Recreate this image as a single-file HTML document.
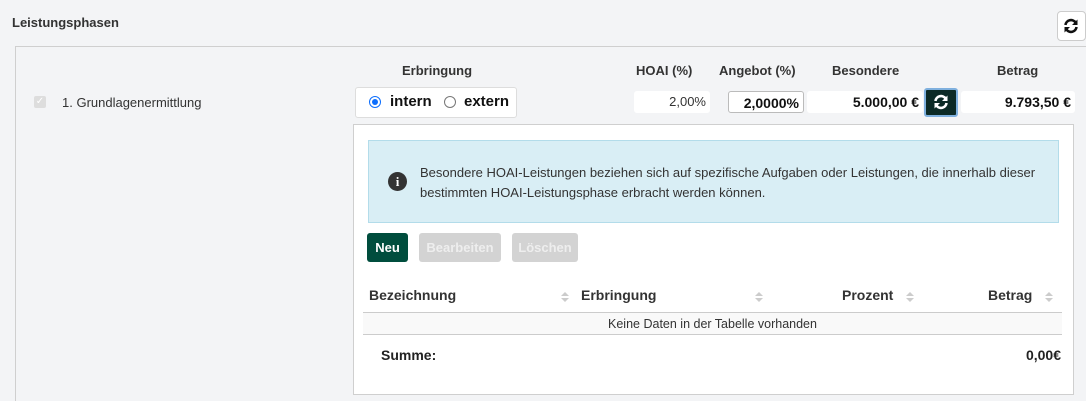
<!DOCTYPE html>
<html style="height:401px;overflow:hidden"><head><meta charset="utf-8"><style>
*{box-sizing:border-box;margin:0;padding:0}
body{width:1086px;height:401px;background:#f3f4f6;font-family:"Liberation Sans",sans-serif;font-size:13px;color:#333;position:relative;overflow:hidden}
.a{position:absolute;white-space:nowrap}
.b{font-weight:bold}
.field{position:absolute;background:#fff;border-radius:3px;height:22px;line-height:22px;text-align:right;padding-right:4px;font-size:13px;color:#111}
.sort{position:absolute;width:8px;height:12px}
.sort:before{content:"";position:absolute;left:0;top:0;border:4px solid transparent;border-bottom:4px solid #ccc;border-top:0}
.sort:after{content:"";position:absolute;left:0;top:6px;border:4px solid transparent;border-top:4px solid #ccc;border-bottom:0}
</style></head><body>
<div class="a b" style="left:12px;top:15px;font-size:13px;color:#333">Leistungsphasen</div>
<div class="a" style="left:1057px;top:11px;width:29px;height:30px;background:#fff;border:1px solid #ccc;border-radius:4px"></div>
<svg class="a" style="left:1063px;top:18px" width="16" height="16" viewBox="0 0 16 16"><path d="M2.5 7 A5.5 5.5 0 0 1 12.5 4.5" fill="none" stroke="#111" stroke-width="2.6"/><path d="M14.5 1.5 L14.5 7 L9 7 Z" fill="#111"/><path d="M13.5 9 A5.5 5.5 0 0 1 3.5 11.5" fill="none" stroke="#111" stroke-width="2.6"/><path d="M1.5 14.5 L1.5 9 L7 9 Z" fill="#111"/></svg>
<div class="a" style="left:15px;top:46px;width:1071px;height:355px;border:1px solid #cfcfcf;border-right:none;border-bottom:none"></div>
<div class="a b" style="left:402px;top:63px">Erbringung</div>
<div class="a b" style="left:636px;top:63px">HOAI (%)</div>
<div class="a b" style="left:719px;top:63px">Angebot (%)</div>
<div class="a b" style="left:832px;top:63px">Besondere</div>
<div class="a b" style="left:997px;top:63px">Betrag</div>
<div class="a" style="left:34px;top:96px;width:12px;height:12px;background:#ddd;border-radius:2px;color:#fff;font-size:10px;line-height:12px;text-align:center">✓</div>
<div class="a" style="left:62px;top:95px;color:#333">1. Grundlagenermittlung</div>
<div class="a" style="left:355px;top:87px;width:162px;height:31px;background:#fff;border:1px solid #ddd;border-radius:3px"></div>
<div class="a" style="left:369px;top:96px;width:12px;height:12px;border-radius:50%;border:1px solid #0d6efd;background:#fff"><div style="margin:2px;width:6px;height:6px;border-radius:50%;background:#0d6efd"></div></div>
<div class="a b" style="left:390px;top:93px;font-size:15px;color:#111">intern</div>
<div class="a" style="left:444px;top:96px;width:12px;height:12px;border-radius:50%;border:1px solid #777;background:#fff"></div>
<div class="a b" style="left:464px;top:93px;font-size:15px;color:#111">extern</div>
<div class="field" style="left:634px;top:91px;width:76px;color:#333">2,00%</div>
<div class="field b" style="left:728px;top:91px;width:76px;border:1px solid #bbb;font-size:14px">2,0000%</div>
<div class="field b" style="left:807px;top:91px;width:116px;font-size:14px">5.000,00 €</div>
<div class="a" style="left:924px;top:88px;width:34px;height:29px;background:#0c2a26;border:2px solid #7fb0de;border-radius:3px"></div>
<svg class="a" style="left:933px;top:94px" width="16" height="16" viewBox="0 0 16 16"><path d="M2.5 7 A5.5 5.5 0 0 1 12.5 4.5" fill="none" stroke="#fff" stroke-width="2.6"/><path d="M14.5 1.5 L14.5 7 L9 7 Z" fill="#fff"/><path d="M13.5 9 A5.5 5.5 0 0 1 3.5 11.5" fill="none" stroke="#fff" stroke-width="2.6"/><path d="M1.5 14.5 L1.5 9 L7 9 Z" fill="#fff"/></svg>
<div class="field b" style="left:961px;top:91px;width:114px;font-size:14px">9.793,50 €</div>
<div class="a" style="left:353px;top:124px;width:721px;height:271px;background:#fff;border:1px solid #cfcfcf"></div>
<div class="a" style="left:368px;top:140px;width:691px;height:83px;background:#d9eef5;border:1px solid #b3dcea"></div>
<div class="a" style="left:388px;top:172px;width:19px;height:19px;border-radius:50%;background:#333;color:#fff;font:bold 13px 'Liberation Serif',serif;text-align:center;line-height:19px">i</div>
<div class="a" style="left:420px;top:163px;font-size:13px;line-height:20px;color:#333;white-space:normal;width:630px">Besondere HOAI-Leistungen beziehen sich auf spezifische Aufgaben oder Leistungen, die innerhalb dieser bestimmten HOAI-Leistungsphase erbracht werden können.</div>
<div class="a b" style="left:367px;top:233px;width:41px;height:29px;background:#004d3d;border-radius:3px;color:#fff;font-size:13px;line-height:29px;text-align:center">Neu</div>
<div class="a b" style="left:419px;top:233px;width:82px;height:29px;background:#d3d3d3;border-radius:3px;color:#eee;font-size:13px;line-height:29px;text-align:center">Bearbeiten</div>
<div class="a b" style="left:512px;top:233px;width:66px;height:29px;background:#d3d3d3;border-radius:3px;color:#eee;font-size:13px;line-height:29px;text-align:center">Löschen</div>
<div class="a b" style="left:369px;top:287px;font-size:14px">Bezeichnung</div><div class="sort" style="left:561px;top:292px"></div>
<div class="a b" style="left:581px;top:287px;font-size:14px">Erbringung</div><div class="sort" style="left:755px;top:292px"></div>
<div class="a b" style="left:842px;top:287px;font-size:14px">Prozent</div><div class="sort" style="left:906px;top:292px"></div>
<div class="a b" style="left:988px;top:287px;font-size:14px">Betrag</div><div class="sort" style="left:1045px;top:292px"></div>
<div class="a" style="left:363px;top:312px;width:699px;height:23px;background:#f9f9f9;border-top:1px solid #ccc;border-bottom:1px solid #ccc;text-align:center;line-height:22px;font-size:12.5px">Keine Daten in der Tabelle vorhanden</div>
<div class="a b" style="left:381px;top:347px;font-size:14px;color:#222">Summe:</div>
<div class="a b" style="left:1013px;top:347px;font-size:14px;color:#222;width:48px;text-align:right">0,00€</div>
</body></html>
